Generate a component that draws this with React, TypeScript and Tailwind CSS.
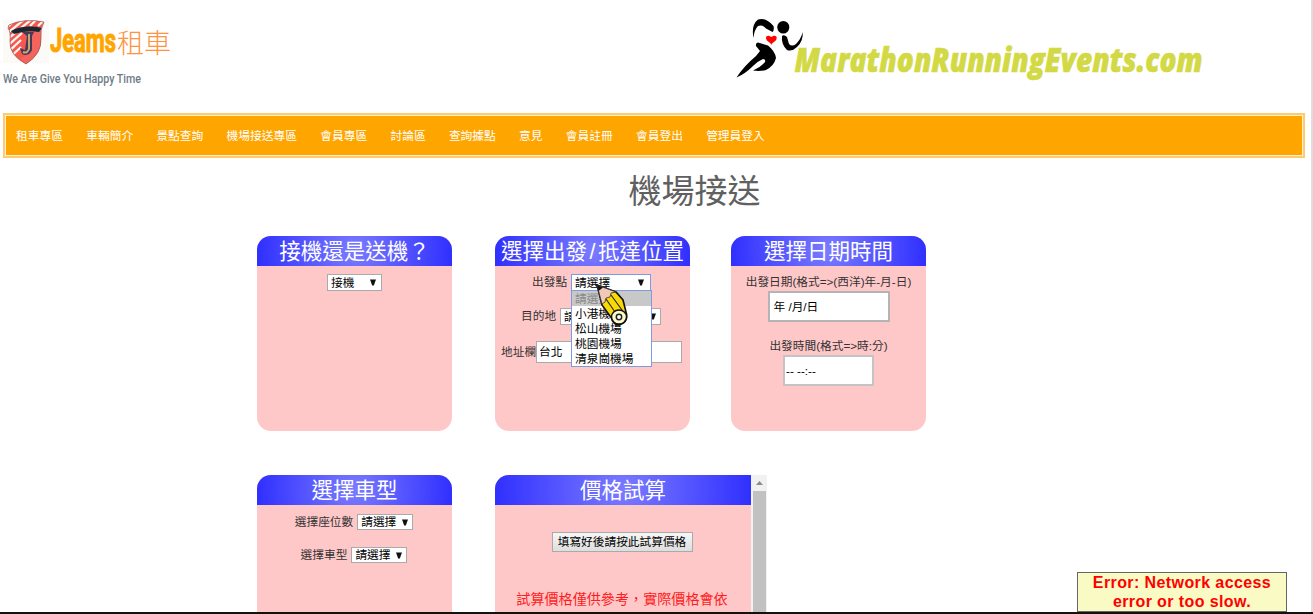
import type { ReactNode } from "react";

const navItems = ["租車專區", "車輛簡介", "景點查詢", "機場接送專區", "會員專區", "討論區", "查詢據點", "意見", "會員註冊", "會員登出", "管理員登入"];
const airports = ["小港機場", "松山機場", "桃園機場", "清泉崗機場"];

function Shield() {
  return (
    <svg className="mt-px h-[52px] w-[48px] shrink-0" viewBox="0 0 48 52">
      <rect x="1" y="4" width="46" height="43" fill="#fbfaf7" />
      <defs>
        <clipPath id="crest">
          <path d="M7 9 Q22 2 42 6 Q38 13 39 22 Q40 38 24 48 Q7 39 8 25 Q9 16 6 12Z" />
        </clipPath>
      </defs>
      <g clipPath="url(#crest)">
        <rect width="48" height="52" fill="#f4584f" />
        <path d="M2 14L16 2M2 20L24 2M2 26L30 3M3 32L20 17M4 38L19 24M6 43L19 31M28 10L36 2M36 10L44 2" stroke="#fff1ec" strokeWidth="2.3" />
        <path d="M30 14h11v20L24 48l-6-5 12-8z" fill="#f4645c" />
      </g>
      <path d="M9 15 Q22 8 40 12 L37 16 Q24 14 12 18Z" fill="#182832" />
      <path d="M20 16H32L30 20V34Q27 41 20 38L18 32L23 34L25 20Z" fill="#46395a" />
      <path d="M27 18V33Q25 38 21 36" fill="none" stroke="#c6a66b" strokeWidth="2" />
      <path d="M7 9 Q22 2 42 6 Q38 13 39 22 Q40 38 24 48 Q7 39 8 25 Q9 16 6 12Z" fill="none" stroke="#8a5a58" strokeWidth=".7" />
    </svg>
  );
}

function RunnerLogo() {
  return (
    <svg className="h-[75px] w-[480px] shrink-0" viewBox="0 0 480 75">
      <path d="M23.500 28Q21 15 28 9.500Q36 7 43.500 16Q44.500 20 42.500 22L36 18.500Q33 14.500 28 16Q24 20 23.500 28Z" />
      <ellipse cx="53.300" cy="17.300" rx="6" ry="6.300" />
      <path d="M52 26Q54 24 57 27L59 34Q62 37 66 34Q71 29 72.700 22Q73.500 31 67 37Q62 42 57 40Q51 34 52 26Z" />
      <path d="M26 36Q25.500 33 28 32.500L38 35.500Q45 41 46 48Q44 56 36 60Q30 61.500 23 60.500Q31 57 35 52Q36 49 33 49Q28 51 23 56Q15 64 6.500 67.500Q14 56 26 46L30 41Z" />
      <path d="M41.300 35C41 32 36 32 36 27.500Q36 25.500 39 25.700L41.300 27L43.600 25.700Q46.700 25.500 46.700 27.500C46.700 32 42 32 41.300 35Z" fill="#f00" />
      <text x="64.500" y="61.500" textLength="408" lengthAdjust="spacingAndGlyphs" className="font-['Open_Sans',sans-serif] text-[34px] font-extrabold italic" fill="#d2d944" stroke="#d2d944" strokeWidth=".6">
        MarathonRunningEvents.com
      </text>
    </svg>
  );
}

function Pencil() {
  return (
    <svg className="absolute left-[25px] top-[10px] h-[43px] w-[34px]" viewBox="0 0 34 43">
      <path d="M1 1L6 21L15.500 34Q17 41 24 40.500Q32 38 30.500 30L27 16L20 8Z" fill="#f8d908" stroke="#111" strokeWidth="1.600" />
      <path d="M1 1L6 20L9 18L10 14L14 13L15 9L20 8Z" fill="#f2c9b8" stroke="#333" strokeWidth=".8" />
      <path d="M1 1L2.500 7L7 3.500Z" fill="#111" />
      <path d="M10 15L19 28M15 11L26 26" stroke="#222" strokeWidth="1.100" />
      <ellipse cx="23" cy="33" rx="7.500" ry="7" fill="#fffbc9" stroke="#111" strokeWidth="1.500" />
      <circle cx="23" cy="33" r="2.700" fill="#fff" stroke="#222" strokeWidth="1.500" />
    </svg>
  );
}

function Arrow() {
  return (
    <svg className="h-[7px] w-[6px] shrink-0" viewBox="0 0 6 7">
      <path d="M0 .5H6L3.800 6.500H2.200Z" fill="#111" />
    </svg>
  );
}

function SelectBox({ children, className }: { children: ReactNode; className: string }) {
  return (
    <div className={`flex shrink-0 items-center justify-between border bg-white pl-[3px] text-black ${className}`}>
      <span>{children}</span>
      <Arrow />
    </div>
  );
}

function Card({ title, className, children }: { title: ReactNode; className: string; children: ReactNode }) {
  return (
    <section className={`flex shrink-0 flex-col overflow-hidden bg-[#ffc8c8] ${className}`}>
      <h2 className="flex h-[30px] shrink-0 items-center justify-center whitespace-nowrap bg-[radial-gradient(circle_farthest-side,#7b7bff,#3030ff)] pt-px text-[21.5px] font-normal leading-[30px] text-white">
        {title}
      </h2>
      {children}
    </section>
  );
}

export default function App() {
  return (
    <div className="flex h-[614px] w-[1313px] flex-col overflow-hidden bg-white font-['Liberation_Sans','Noto_Sans_CJK_TC',sans-serif] text-[11.7px] leading-[16px] text-[#333]">
      <div className="flex h-[612px] shrink-0 overflow-hidden border-r-2 border-[#dedede]">
        <div className="flex w-[1311px] shrink-0 flex-col">
          <header className="flex h-[113px] shrink-0 items-start justify-between pl-[2px] pr-[101px] pt-[10px]">
            <div className="flex flex-col pt-[5px]">
              <div className="flex h-[54px] items-start">
                <Shield />
                <svg className="h-[52px] w-[124px]" viewBox="0 0 124 52">
                  <text x="0" y="37" textLength="66" lengthAdjust="spacingAndGlyphs" fill="orange" stroke="orange" strokeWidth="1.1" className="font-['Roboto',sans-serif] text-[34px] font-bold">Jeams</text>
                  <text x="67" y="38" fill="#ff9440" className="font-['Noto_Sans_CJK_TC',sans-serif] text-[27px] font-light">租車</text>
                </svg>
              </div>
              <svg className="h-[20px] w-[150px]" viewBox="0 0 150 20">
                <text x="1" y="14" textLength="138" lengthAdjust="spacingAndGlyphs" fill="#6e7b87" className="font-['Roboto',sans-serif] text-[13.5px] font-medium">We Are Give You Happy Time</text>
              </svg>
            </div>
            <RunnerLogo />
          </header>

          <nav className="ml-[3px] flex h-[45px] w-[1302px] shrink-0 border-2 border-[#ffcb70]">
            <ul className="flex flex-1 items-center gap-[23.2px] whitespace-nowrap border border-[#fff0d0] bg-[orange] pl-[10px] text-[11.75px] text-white">
              {navItems.map((item) => <li key={item}>{item}</li>)}
            </ul>
          </nav>

          <h1 className="h-[78px] shrink-0 pl-[78px] pt-px text-center text-[33px] font-normal leading-[66px] text-[#606060]">機場接送</h1>

          <main className="flex flex-col gap-[44px] pl-[257px]">
            <div className="flex">
              <Card title="接機還是送機？" className="mr-[43px] h-[195px] w-[195px] rounded-[14px]">
                <div className="flex justify-center pt-[8px]">
                  <SelectBox className="h-[17px] w-[55px] border-[#aaa] pr-[5px]">接機</SelectBox>
                </div>
              </Card>

              <div className="relative mr-[41px] flex">
                <Card title={<>選擇出發<span className="px-[2.500px]">/</span>抵達位置</>} className="h-[195px] w-[195px] rounded-[14px]">
                  <div className="flex h-[42px] items-start gap-[4px] whitespace-nowrap pl-[37px] pt-[8px]">
                    <span>出發點</span>
                    <SelectBox className="h-[17px] w-[80px] border-[#7c9cdf] pr-[6px]">請選擇</SelectBox>
                  </div>
                  <div className="flex h-[33px] items-start gap-[4px] whitespace-nowrap pl-[26px]">
                    <span>目的地</span>
                    <SelectBox className="h-[17px] w-[101px] border-[#aaa] pr-[4px]">請選擇</SelectBox>
                  </div>
                  <div className="flex items-center whitespace-nowrap pl-[6px]">
                    <span>地址欄</span>
                    <div className="flex h-[22px] w-[146px] items-center border border-[#aaa] bg-white pl-[2px] text-black">台北</div>
                  </div>
                </Card>
                <ul className="absolute left-[76px] top-[54px] w-[81px] border border-[#7c9cdf] bg-white text-[11.7px] leading-[15px] text-black">
                  <li className="h-[15px] bg-[#c8c8c8] pl-[3px] text-[#888]">請選擇</li>
                  {airports.map((name) => <li key={name} className="h-[15px] pl-[3px]">{name}</li>)}
                </ul>
                <div className="absolute left-[76px] top-[38px]">
                  <Pencil />
                </div>
              </div>

              <Card title="選擇日期時間" className="h-[195px] w-[195px] rounded-[14px]">
                <div className="flex flex-col items-center whitespace-nowrap pt-[8px]">
                  <span className="h-[17px]">出發日期(格式=&gt;(西洋)年-月-日)</span>
                  <div className="flex h-[31px] w-[122px] items-center border-2 border-[#b4b4b4] bg-white pl-[4px] text-black">年 /月/日</div>
                  <span className="mt-[16px] h-[17px]">出發時間(格式=&gt;時:分)</span>
                  <div className="flex h-[31px] w-[91px] items-center border-2 border-[#c4c4c4] bg-white pl-px text-black">-- --:--</div>
                </div>
              </Card>
            </div>

            <div className="flex">
              <Card title="選擇車型" className="mr-[43px] h-[195px] w-[195px] rounded-[14px]">
                <div className="flex flex-col items-center gap-[17px] whitespace-nowrap pr-px pt-[9px]">
                  <div className="flex gap-[4px]">
                    <span>選擇座位數</span>
                    <SelectBox className="h-[16px] w-[56px] border-[#aaa] pr-[4px]">請選擇</SelectBox>
                  </div>
                  <div className="flex gap-[4px]">
                    <span>選擇車型</span>
                    <SelectBox className="h-[16px] w-[56px] border-[#aaa] pr-[4px]">請選擇</SelectBox>
                  </div>
                </div>
              </Card>

              <Card title="價格試算" className="h-[195px] w-[256px] rounded-l-[14px]">
                <div className="flex flex-col items-center pt-[27px]">
                  <button className="mr-[2px] h-[20px] w-[141px] whitespace-nowrap border border-[#aaa] bg-linear-to-b from-[#f6f6f6] to-[#dedede] text-[11.7px] leading-[18px] text-black">填寫好後請按此試算價格</button>
                  <p className="mt-[37px] whitespace-nowrap pr-[2px] text-[14.1px] leading-[20px] text-[#ff1c1c]">試算價格僅供參考，實際價格會依</p>
                </div>
              </Card>
              <div className="flex w-[16px] flex-col items-center bg-[#f1f1f1]">
                <div className="flex h-[16px] items-center justify-center">
                  <svg className="h-[4px] w-[7px]" viewBox="0 0 7 4"><path d="M0 4L3.500 0L7 4Z" fill="#8b8b8b" /></svg>
                </div>
                <div className="w-[13px] flex-1 bg-[#c1c1c1]" />
              </div>
            </div>
          </main>
        </div>
      </div>
      <footer className="h-[2px] shrink-0 bg-[#15110d]" />
      <div role="alert" className="absolute left-[1077px] top-[572px] h-[40px] w-[210px] border border-[#666] bg-[#fafac5] text-center text-[16px] font-bold leading-[19px] tracking-[0.4px] text-[red]">
        Error: Network access<br />error or too slow.
      </div>
    </div>
  );
}
